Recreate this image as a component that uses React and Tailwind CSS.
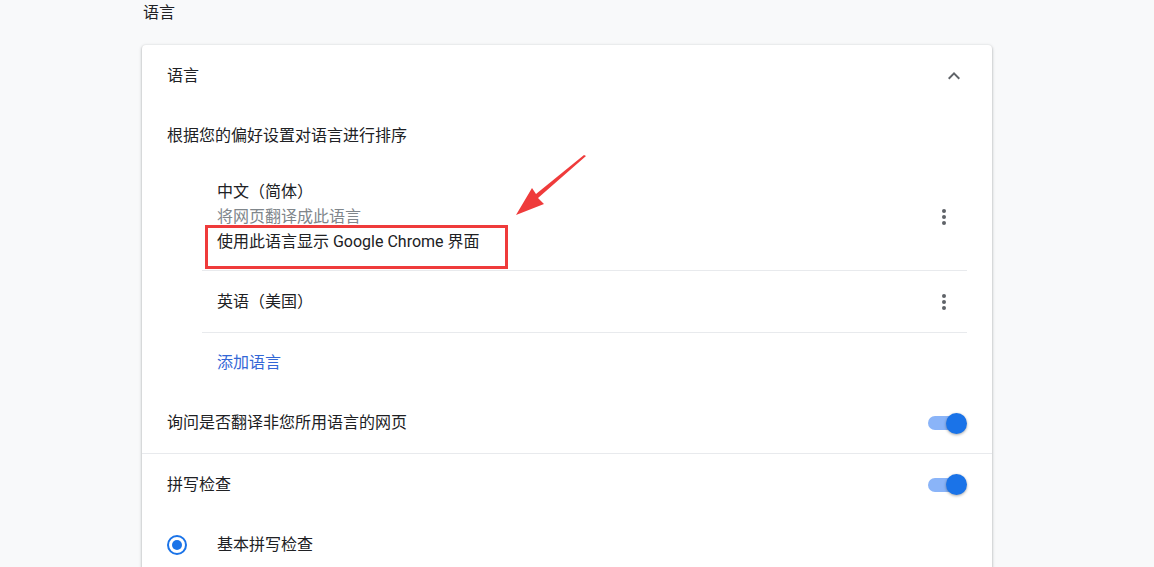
import React from 'react';

const font = { fontFamily: 'Roboto, "Noto Sans CJK SC", sans-serif' };

function Kebab() {
  return (
    <div className="flex flex-col items-center gap-[2px] w-6">
      <span className="w-1 h-1 rounded-full bg-[#5f6368]" />
      <span className="w-1 h-1 rounded-full bg-[#5f6368]" />
      <span className="w-1 h-1 rounded-full bg-[#5f6368]" />
    </div>
  );
}

function Toggle() {
  return (
    <div className="relative w-[39px] h-[21px] flex items-center">
      <div className="w-[34px] h-[14px] rounded-full bg-[#8ab4f8]" />
      <div className="absolute right-0 top-0 w-[21px] h-[21px] rounded-full bg-[#1a73e8] shadow-[0_1px_3px_rgba(0,0,0,0.35)]" />
    </div>
  );
}

export default function App() {
  return (
    <div className="relative w-[1154px] h-[567px] overflow-hidden bg-[#f8f9fa] text-[#202124]" style={font}>
      <div className="ml-[143px] h-[45px] pt-[1px] text-[16px] leading-[24px]">语言</div>

      <div className="ml-[142px] w-[850px] bg-white rounded-[4px] shadow-[0_1px_2px_rgba(60,64,67,0.3),0_1px_3px_1px_rgba(60,64,67,0.15)] text-[16px]">
        <div className="px-[25px] pt-[1px]">
          {/* 标题 */}
          <div className="h-[60px] flex items-center justify-between">
            <span>语言</span>
            <svg width="24" height="24" viewBox="0 0 24 24" className="mr-[1px]">
              <path d="M7.4 15.4 12 10.8l4.6 4.6L18 14l-6-6-6 6z" fill="#5f6368" />
            </svg>
          </div>

          <div className="h-[60px] flex items-center">根据您的偏好设置对语言进行排序</div>

          {/* 语言列表 */}
          <div className="ml-[35px]">
            <div className="flex items-center justify-between pt-[13px] pb-[16px] pl-[15px] border-b border-[#e8eaed]">
              <div className="leading-[25px]">
                <div>中文（简体）</div>
                <div className="text-[#80868b]">将网页翻译成此语言</div>
                <div>使用此语言显示 Google Chrome 界面</div>
              </div>
              <div className="mr-[11px]"><Kebab /></div>
            </div>
            <div className="h-[62px] flex items-center justify-between pl-[15px] border-b border-[#e8eaed]">
              <span>英语（美国）</span>
              <div className="mr-[11px]"><Kebab /></div>
            </div>
            <div className="h-[60px] flex items-center pl-[15px] text-[#3367d6]">添加语言</div>
          </div>

          <div className="h-[60px] flex items-center justify-between">
            <span>询问是否翻译非您所用语言的网页</span>
            <Toggle />
          </div>
        </div>

        {/* 拼写检查 */}
        <div className="px-[25px] border-t border-[#e8eaed]">
          <div className="h-[61px] flex items-center justify-between">
            <span>拼写检查</span>
            <Toggle />
          </div>
          <div className="h-[60px] flex items-center">
            <div className="w-[20px] h-[20px] rounded-full border-2 border-[#1a73e8] flex items-center justify-center">
              <div className="w-[10px] h-[10px] rounded-full bg-[#1a73e8]" />
            </div>
            <span className="ml-[30px]">基本拼写检查</span>
          </div>
        </div>
      </div>

      {/* 标注 */}
      <div className="absolute left-[205px] top-[225px] w-[303px] h-[44px] border-[3px] border-[#ef3b3b]" />
      <svg className="absolute left-0 top-0" width="1154" height="567">
        <polygon points="586,156 538,198 544,204 516,215 532,188 536,194 584,155" fill="#ef3b3b" />
      </svg>
    </div>
  );
}
